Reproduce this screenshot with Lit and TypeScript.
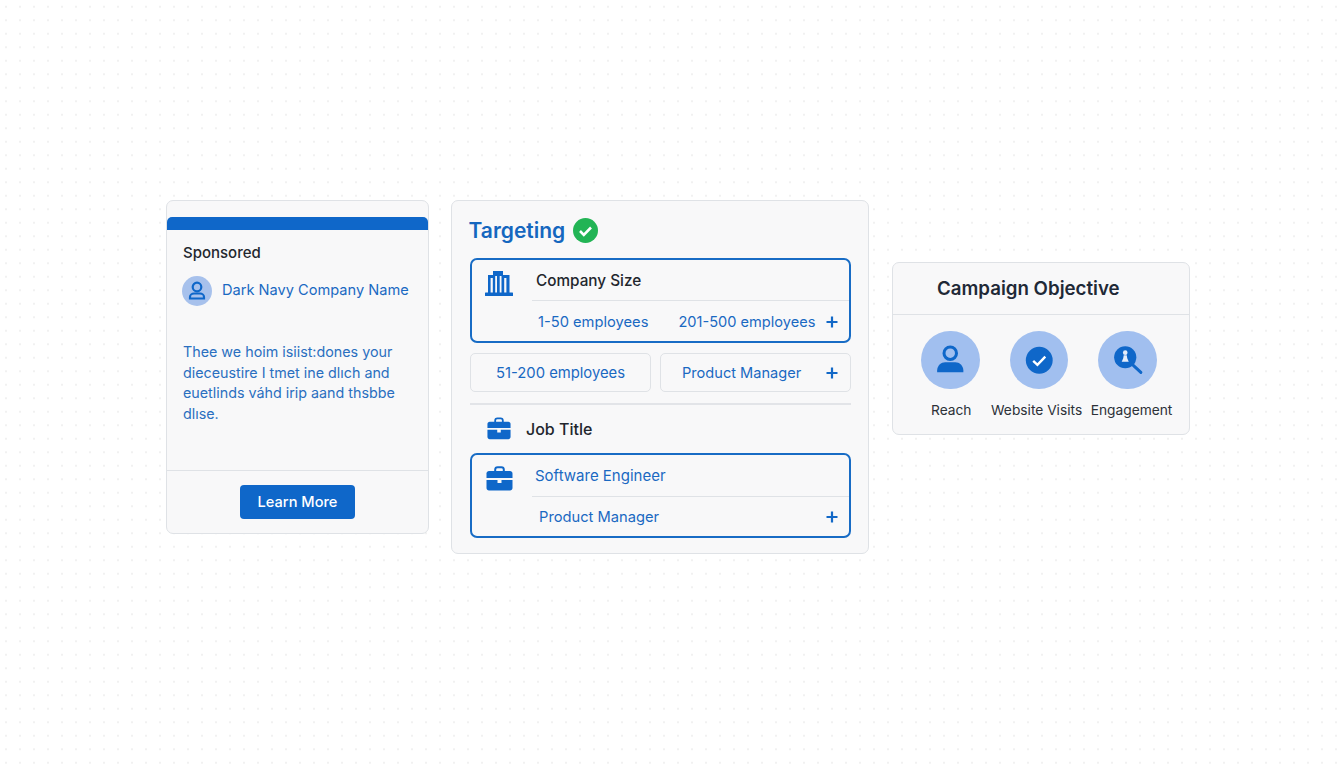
import { LitElement, html, css, svg } from "lit";
import { customElement } from "lit/decorators.js";

const plus = svg`<svg class="plus" width="12" height="12" viewBox="0 0 12 12"><path d="M6 0.5v11M0.5 6h11" stroke="#1268c7" stroke-width="2.2" fill="none"/></svg>`;

const briefcase = (w: number, h: number) => svg`<svg class="bc" width=${w} height=${h} viewBox="0 0 27 25">
  <path d="M9.2 6V3.6C9.2 2.2 10.3 1.2 11.7 1.2h3.600c1.400 0 2.500 1 2.500 2.400V6" fill="none" stroke="#0f67c9" stroke-width="2"/>
  <path d="M3 5h21c1.400 0 2.500 1.100 2.500 2.500V12H0.500V7.500C0.500 6.100 1.600 5 3 5z" fill="#0f67c9"/>
  <path d="M0.500 14H11.500V17H15.500V14H26.500V22c0 1.400-1.100 2.500-2.500 2.500H3C1.600 24.500 0.500 23.400 0.500 22z" fill="#0f67c9"/>
</svg>`;

const building = svg`<svg class="bld" width="28" height="25" viewBox="0 0 28 25">
  <rect x="0" y="21.500" width="28" height="3.500" rx="0.500" fill="#0f67c9"/>
  <path d="M8 0h10v4h6.500v18H3V4H8z" fill="#0f67c9"/>
  <rect x="5.600" y="7" width="2.200" height="14.500" fill="#f8f8f9"/>
  <rect x="10.200" y="5" width="1.800" height="16.500" fill="#f8f8f9"/>
  <rect x="14.700" y="5" width="1.800" height="16.500" fill="#f8f8f9"/>
  <rect x="19.200" y="7" width="2.200" height="14.500" fill="#f8f8f9"/>
</svg>`;

@customElement("app-root")
export class AppRoot extends LitElement {
  static styles = css`
    :host {
      display: block;
      box-sizing: border-box;
      height: 768px;
      width: 1344px;
      overflow: hidden;
      padding: 200px 0 0 166px;
      font-family: Inter, "Liberation Sans", sans-serif;
      background-color: #ffffff;
      background-image: radial-gradient(circle, #f1f1f1 0.8px, transparent 1.1px);
      background-size: 14px 13.5px;
      background-position: -1px 0;
      color: #1f2530;
    }
    .stage { display: flex; align-items: flex-start; gap: 22px; }
    .card {
      box-sizing: border-box;
      background: #f8f8f9;
      border: 1.5px solid #dfe2e6;
      border-radius: 7px;
    }
    .ad { width: 263px; height: 334px; padding-top: 15.500px; display: flex; flex-direction: column; }
    .bar { height: 13px; background: #0f67c9; border-radius: 5px 5px 0 0; flex: none; }
    .ad-body { padding: 13px 16px 0 15px; flex: 1; }
    .sponsored { font-size: 15px; font-weight: 500; line-height: 20px; color: #23272e; padding-left: 1px; }
    .company { display: flex; align-items: center; gap: 10px; margin-top: 13px; }
    .avatar {
      width: 30px; height: 30px; border-radius: 50%; background: #a7c1ec;
      display: flex; align-items: center; justify-content: center; flex: none;
    }
    .cname { font-size: 14.600px; color: #1a69c2; white-space: nowrap; padding-bottom: 1px; }
    .copy { margin: 36.500px 0 0 1px; font-size: 14.300px; line-height: 20.500px; color: #2a6fc0; white-space: nowrap; }
    .ad-foot { border-top: 1.5px solid #dfe2e6; height: 63px; box-sizing: border-box; display: flex; justify-content: center; padding-top: 14px; }
    .btn {
      width: 115px; height: 34px; border: 0; border-radius: 4px; background: #0f67c9; color: #fff;
      font: 500 14.600px Inter, sans-serif; padding: 0;
    }

    .targeting { width: 418px; height: 354px; padding: 15px 17px 0 16.500px; }
    .t-head { display: flex; align-items: center; gap: 8px; height: 28px; }
    .t-title { font-size: 21px; font-weight: 600; color: #1567bf; }
    .box {
      box-sizing: border-box; width: 381px; height: 85px; margin-left: 1.500px;
      border: 2px solid #186cc5; border-radius: 7px;
      display: grid; grid-template-columns: 60px 1fr;
    }
    .box-a { margin-top: 14px; }
    .box-a .r1 { padding-top: 1px; }
    .box-b { margin-top: 12px; }
    .box-b .r1 { padding-left: 3px; }
    .box-b .r2 { padding-left: 7px; }
    .box-b .rows { grid-template-rows: 42px 1fr; }
    .bico { display: flex; justify-content: center; padding: 11px 6px 0 0; box-sizing: border-box; }
    .rows { display: grid; grid-template-rows: 41px 1fr; }
    .r1 { border-bottom: 1.5px solid #dfe2e6; display: flex; align-items: center; padding: 0 4px 0 4px; }
    .r2 { display: flex; align-items: center; padding: 1.500px 11.500px 0 6px; font-size: 14.700px; color: #1a69c2; }
    .strong { font-size: 15.300px; font-weight: 500; color: #22262d; }
    .link { font-size: 15px; color: #1a69c2; }
    .gap1 { margin-left: 30px; font-size: 14.600px; }
    .grow { flex: 1; }
    .pills { display: flex; gap: 9px; margin: 10px 0 0 1.500px; }
    .pill {
      box-sizing: border-box; height: 39px; border: 1.5px solid #dfe2e6; border-radius: 5px; background: #f8f8f9;
      display: flex; align-items: center; font-size: 14.800px; color: #1a69c2;
    }
    .p1 { width: 181px; justify-content: center; }
    .p2 { width: 191px; padding: 0 12.500px 0 21px; justify-content: space-between; font-size: 14.600px; }
    .sep { height: 1.500px; background: #e2e4e8; margin: 11px 0 0 1.500px; width: 381px; }
    .job { display: flex; align-items: center; gap: 15px; height: 24px; margin: 12px 0 0 18.500px; font-size: 16px; font-weight: 500; color: #22262d; }

    .objective { width: 298px; height: 173px; margin: 61.500px 0 0 1px; }
    .o-head { height: 52px; box-sizing: border-box; border-bottom: 1.5px solid #dfe2e6; padding: 12px 0 0 44px; font-size: 18.700px; font-weight: 600; line-height: 27px; color: #1f2937; }
    .circles { display: flex; gap: 30px; padding: 16px 0 0 28px; }
    .circle { width: 58.500px; height: 58.500px; border-radius: 50%; background: #a1bfef; display: block; flex: none; }
    .labels { display: flex; margin-top: 11.500px; padding-left: 38px; font-size: 13.750px; line-height: 18px; color: #2c3138; white-space: nowrap; }
    .l2 { margin-left: 19.500px; }
    .l3 { margin-left: 8.500px; }
  `;

  render() {
    return html`<div class="stage">
      <section class="card ad">
        <div class="bar"></div>
        <div class="ad-body">
          <div class="sponsored">Sponsored</div>
          <div class="company">
            <span class="avatar">
              <svg width="18" height="19" viewBox="0 0 18 19" fill="none" stroke="#0f67c9" stroke-width="2.200">
                <circle cx="9" cy="6" r="4.300"/>
                <path d="M2 17.500v-1.500c0-2 2-3.500 4-3.500h6c2 0 4 1.500 4 3.500v1.500z"/>
              </svg>
            </span>
            <span class="cname">Dark Navy Company Name</span>
          </div>
          <div class="copy">Thee we hoim isiist:dones your<br>dieceustire I tmet ine dlıch and<br>euetlinds váhd irip aand thsbbe<br>dlıse.</div>
        </div>
        <div class="ad-foot"><button class="btn">Learn More</button></div>
      </section>

      <section class="card targeting">
        <div class="t-head">
          <span class="t-title">Targeting</span>
          <svg width="25" height="25" viewBox="0 0 25 25"><circle cx="12.500" cy="12.500" r="12.500" fill="#22b455"/><path d="M7 13l3.800 3.800L18 9.500" fill="none" stroke="#fff" stroke-width="2.600"/></svg>
        </div>
        <div class="box box-a">
          <div class="bico">${building}</div>
          <div class="rows">
            <div class="r1"><span class="strong">Company Size</span></div>
            <div class="r2"><span>1-50 employees</span><span class="gap1">201-500 employees</span><span class="grow"></span>${plus}</div>
          </div>
        </div>
        <div class="pills">
          <div class="pill p1">51-200 employees</div>
          <div class="pill p2"><span>Product Manager</span>${plus}</div>
        </div>
        <div class="sep"></div>
        <div class="job">${briefcase(24, 23)}<span>Job Title</span></div>
        <div class="box box-b">
          <div class="bico">${briefcase(27, 25)}</div>
          <div class="rows">
            <div class="r1"><span class="link">Software Engineer</span></div>
            <div class="r2"><span>Product Manager</span><span class="grow"></span>${plus}</div>
          </div>
        </div>
      </section>

      <section class="card objective">
        <div class="o-head">Campaign Objective</div>
        <div class="circles">
          <svg class="circle" viewBox="0 0 58 58">
            <circle cx="29" cy="22" r="6.200" fill="none" stroke="#0f67c9" stroke-width="3"/>
            <path d="M16 41v-2c0-4.500 4-8 8-8h10c4 0 8 3.500 8 8v2z" fill="#0f67c9"/>
          </svg>
          <svg class="circle" viewBox="0 0 58 58">
            <circle cx="29" cy="29" r="13.300" fill="#0f67c9"/>
            <path d="M23 29.500l4.200 4L35 25.500" fill="none" stroke="#fff" stroke-width="2.400"/>
          </svg>
          <svg class="circle" viewBox="0 0 58 58">
            <path d="M35 34l7.500 7" stroke="#0f67c9" stroke-width="3" stroke-linecap="round"/>
            <circle cx="27" cy="26" r="11" fill="#0f67c9"/>
            <circle cx="27" cy="21.500" r="2.300" fill="#e3ecfa"/>
            <path d="M25.500 24h3l.5 3 1.500 3.500h-7L25 27z" fill="#e3ecfa"/>
          </svg>
        </div>
        <div class="labels"><span>Reach</span><span class="l2">Website Visits</span><span class="l3">Engagement</span></div>
      </section>
    </div>`;
  }
}
